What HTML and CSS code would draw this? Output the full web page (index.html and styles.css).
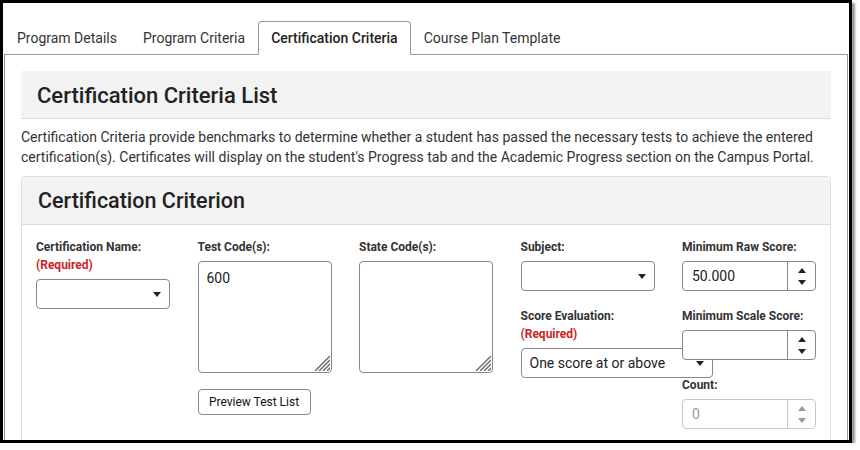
FILE: index.html
```html
<!DOCTYPE html>
<html lang="en">
<head>
<meta charset="utf-8">
<title>Certification Criteria</title>
<link rel="stylesheet" href="styles.css">
</head>
<body>
<div class="frame">
  <div class="tabs">
    <div class="tab">Program Details</div>
    <div class="tab">Program Criteria</div>
    <div class="tab active">Certification Criteria</div>
    <div class="tab">Course Plan Template</div>
  </div>
  <div class="panel">
    <div class="list-header"><h1>Certification Criteria List</h1></div>
    <p class="intro">Certification Criteria provide benchmarks to determine whether a student has passed the necessary tests to achieve the entered certification(s). Certificates will display on the student's Progress tab and the Academic Progress section on the Campus Portal.</p>
    <div class="card">
      <div class="card-header"><h2>Certification Criterion</h2></div>
      <div class="card-body">
        <div class="col">
          <div class="field">
            <label class="lbl">Certification Name:</label>
            <span class="req">(Required)</span>
            <div class="select-wrap w134"><select class="select"><option></option></select><i class="caret"></i></div>
          </div>
        </div>
        <div class="col">
          <div class="field">
            <label class="lbl">Test Code(s):</label>
            <div class="ta-wrap"><textarea class="ta">600</textarea><svg class="grip" width="16" height="16" viewBox="0 0 16 16"><path d="M1 16L16 1M5 16L16 5M9 16L16 9M13 16L16 13" stroke="#666" stroke-width="1.4" fill="none"/></svg></div>
          </div>
          <button class="btn">Preview Test List</button>
        </div>
        <div class="col">
          <div class="field">
            <label class="lbl">State Code(s):</label>
            <div class="ta-wrap"><textarea class="ta"></textarea><svg class="grip" width="16" height="16" viewBox="0 0 16 16"><path d="M1 16L16 1M5 16L16 5M9 16L16 9M13 16L16 13" stroke="#666" stroke-width="1.4" fill="none"/></svg></div>
          </div>
        </div>
        <div class="col">
          <div class="field">
            <label class="lbl">Subject:</label>
            <div class="select-wrap w134"><select class="select"><option></option></select><i class="caret"></i></div>
          </div>
          <div class="field">
            <label class="lbl">Score Evaluation:</label>
            <span class="req">(Required)</span>
            <div class="select-wrap w192"><select class="select"><option>One score at or above</option></select><i class="caret"></i></div>
          </div>
        </div>
        <div class="col top">
          <div class="field">
            <label class="lbl">Minimum Raw Score:</label>
            <div class="num"><input class="val" value="50.000"><span class="spin"><i class="up"></i><i class="down"></i></span></div>
          </div>
          <div class="field">
            <label class="lbl">Minimum Scale Score:</label>
            <div class="num"><input class="val" value=""><span class="spin"><i class="up"></i><i class="down"></i></span></div>
          </div>
          <div class="field">
            <label class="lbl">Count:</label>
            <div class="num disabled"><input class="val" value="0" disabled><span class="spin"><i class="up"></i><i class="down"></i></span></div>
          </div>
        </div>
      </div>
    </div>
  </div>
</div>
</body>
</html>
```

FILE: styles.css
```css
* { box-sizing: border-box; }
body {
  margin: 0;
  background: #fff;
  font-family: Roboto, "Liberation Sans", sans-serif;
  color: #333;
}
.frame {
  width: 852px;
  height: 443px;
  border: 3px solid #000;
  box-shadow: 3px 3px 2px rgba(0,0,0,0.4);
  overflow: hidden;
  background: #fff;
}
.tabs {
  display: flex;
  align-items: flex-start;
  padding: 18px 1px 0;
}
.tab {
  height: 33px;
  line-height: 32px;
  padding: 0 12px;
  font-size: 14px;
  color: #333;
  border: 1px solid transparent;
  border-bottom: 0;
}
.tab.active {
  height: 34px;
  border-color: #999;
  border-bottom: 1px solid #fff;
  border-radius: 4px 4px 0 0;
  margin-bottom: -1px;
  background: #fff;
  color: #222;
  font-weight: 500;
  position: relative;
  z-index: 1;
}
.panel {
  border: 1px solid #999;
  margin: 0 1px;
  padding: 16px;
  height: 500px;
}
.list-header {
  background: #f3f3f3;
  border-bottom: 1px solid #ddd;
  padding: 2px 16px 0;
  height: 48px;
}
.list-header h1 {
  margin: 0;
  font-size: 22px;
  font-weight: 500;
  line-height: 45px;
  color: #222;
}
.intro {
  margin: 8px 0 9px;
  font-size: 14px;
  line-height: 20px;
  color: #333;
}
.card {
  border: 1px solid #ddd;
  border-radius: 4px;
}
.card-header {
  background: #f3f3f3;
  border-bottom: 1px solid #ddd;
  height: 48px;
  padding: 0 16px;
  border-radius: 4px 4px 0 0;
}
.card-header h2 {
  margin: 0;
  font-size: 21.5px;
  font-weight: 500;
  line-height: 47px;
  color: #222;
}
.card-body {
  display: grid;
  grid-template-columns: repeat(5, 134px);
  column-gap: 27.5px;
  padding: 13px 14px 20px;
}
.col {
  display: flex;
  flex-direction: column;
  align-items: flex-start;
}
.col.top { position: relative; z-index: 2; }
.field {
  display: flex;
  flex-direction: column;
  margin-bottom: 16px;
}
.lbl, .req {
  font-size: 12px;
  font-weight: 700;
  line-height: 18px;
  color: #333;
}
.req { color: #cc1f26; }
.select-wrap {
  position: relative;
  margin-top: 5px;
  height: 30px;
}
.w134 { width: 134px; }
.w192 { width: 192px; }
.select {
  appearance: none;
  -webkit-appearance: none;
  width: 100%;
  height: 30px;
  border: 1px solid #888;
  border-radius: 4px;
  background: #fff;
  padding: 0 24px 0 8px;
  font-family: Roboto, "Liberation Sans", sans-serif;
  font-size: 14px;
  color: #222;
}
.caret {
  position: absolute;
  right: 9px;
  top: 13px;
  width: 0;
  height: 0;
  border-left: 4px solid transparent;
  border-right: 4px solid transparent;
  border-top: 5px solid #222;
}
.ta-wrap {
  position: relative;
  margin-top: 5px;
  width: 134px;
  height: 112px;
}
.ta {
  display: block;
  width: 134px;
  height: 112px;
  border: 1px solid #888;
  border-radius: 4px;
  padding: 7px 8px;
  font-family: Roboto, "Liberation Sans", sans-serif;
  font-size: 14px;
  line-height: 18px;
  color: #222;
  resize: none;
  background: #fff;
}
.grip {
  position: absolute;
  right: 2px;
  bottom: 2px;
}
.btn {
  width: 113px;
  height: 26px;
  border: 1px solid #888;
  border-radius: 4px;
  background: #fff;
  font-family: Roboto, "Liberation Sans", sans-serif;
  font-size: 12px;
  color: #111;
  padding: 0;
}
.num {
  display: flex;
  margin-top: 5px;
  width: 134px;
  height: 30px;
  border: 1px solid #888;
  border-radius: 4px;
  background: #fff;
}
.val {
  flex: 1;
  min-width: 0;
  border: 0;
  background: transparent;
  padding: 0 0 0 9px;
  font-family: Roboto, "Liberation Sans", sans-serif;
  font-size: 14px;
  color: #222;
  outline: none;
}
.spin {
  width: 28px;
  border-left: 1px solid #888;
  display: flex;
  flex-direction: column;
  align-items: center;
  justify-content: center;
  gap: 7px;
}
.up, .down {
  width: 0;
  height: 0;
  border-left: 4px solid transparent;
  border-right: 4px solid transparent;
}
.up { border-bottom: 5px solid #222; }
.down { border-top: 5px solid #222; }
.num.disabled { border-color: #c8c8c8; }
.num.disabled .spin { border-left-color: #c8c8c8; }
.num.disabled .val { color: #999; }
.num.disabled .up { border-bottom-color: #999; }
.num.disabled .down { border-top-color: #999; }
```
